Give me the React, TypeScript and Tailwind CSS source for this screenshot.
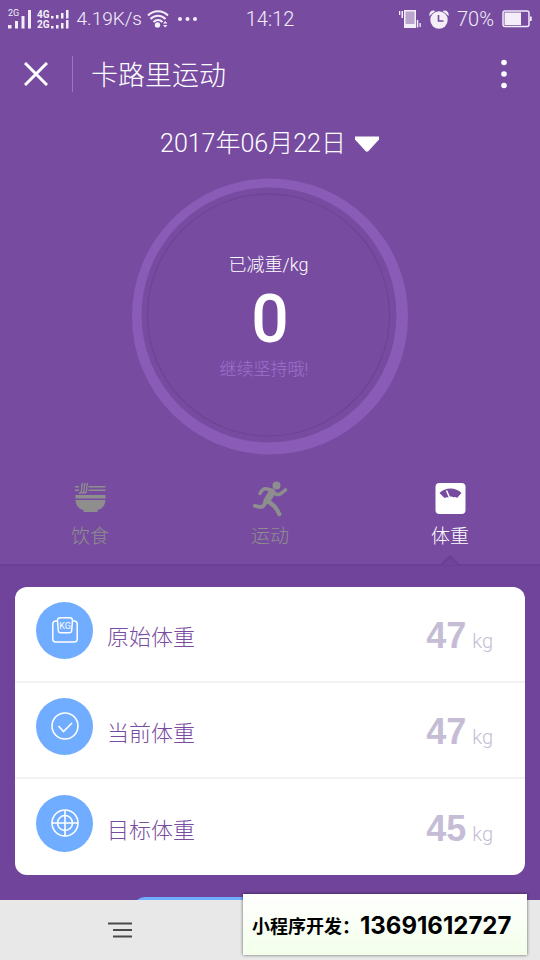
import type { ReactNode } from "react";

type Tab = {
  id: string;
  label: string;
  icon: ReactNode;
};

type WeightRow = {
  label: string;
  value: number;
  icon: ReactNode;
};

function SignalIcon() {
  return (
    <svg width="24" height="20" viewBox="0 0 24 20" fill="currentColor" aria-hidden="true">
      <rect x="0" y="16" width="3.500" height="3.500" />
      <rect x="7" y="12" width="3" height="7.500" />
      <rect x="13.500" y="7" width="3" height="12.500" />
      <rect x="20" y="1" width="3" height="18.500" />
    </svg>
  );
}

function SmallBars() {
  return (
    <svg width="18" height="9" viewBox="0 0 18 9" fill="currentColor" aria-hidden="true">
      <rect x="0" y="6" width="2.500" height="2.500" />
      <rect x="5" y="5" width="2.500" height="3.500" />
      <rect x="10" y="3" width="2.500" height="5.500" />
      <rect x="15" y="0" width="2.500" height="8.500" />
    </svg>
  );
}

function WifiIcon() {
  return (
    <svg width="22" height="18" viewBox="0 0 22 18" fill="none" stroke="currentColor" strokeWidth="2" aria-hidden="true">
      <path d="M1 5.5C6.500-.300 15.500-.300 21 5.500" />
      <path d="M3.500 9C7.700 4.500 14.300 4.500 18.500 9" />
      <path d="M6.500 12C9 9.200 13 9.200 15.500 12" />
      <circle cx="10.500" cy="15" r="2.700" fill="currentColor" stroke="none" />
      <path d="M16 13.500l2.200-2.500 2.200 2.500zM16 15l2.200 2.500 2.200-2.500z" fill="currentColor" stroke="none" />
    </svg>
  );
}

function VibrateIcon() {
  return (
    <svg width="22" height="18" viewBox="0 0 22 18" fill="currentColor" aria-hidden="true">
      <rect x="0" y="1" width="1.300" height="4" />
      <rect x="2.500" y="1" width="1.500" height="7" />
      <path d="M5 0h12v18H5z" />
      <path d="M6.500 1.500h9v12.500h-9z" fill="#bba5cf" />
      <rect x="17.800" y="10" width="1.500" height="7.500" />
      <rect x="20.500" y="13" width="1.300" height="4" />
    </svg>
  );
}

function AlarmIcon() {
  return (
    <svg width="20" height="19" viewBox="0 0 20 19" aria-hidden="true">
      <path d="M.5 6C-.5 2 3 -.8 6.500 1zM19.500 6C20.500 2 17 -.8 13.500 1z" fill="currentColor" />
      <circle cx="10" cy="10" r="9.300" fill="#774ca0" />
      <circle cx="10" cy="10" r="8.700" fill="currentColor" />
      <path d="M9.500 5v6h5" fill="none" stroke="#774ca0" strokeWidth="1.600" />
    </svg>
  );
}

function BatteryIcon() {
  return (
    <svg width="30" height="18" viewBox="0 0 30 18" aria-hidden="true">
      <rect x="1" y="1" width="26" height="15.500" rx="2" fill="none" stroke="currentColor" strokeWidth="1.500" />
      <rect x="2.500" y="2.500" width="16.500" height="12.500" fill="currentColor" />
      <rect x="28" y="6.500" width="1.700" height="4.500" fill="currentColor" />
    </svg>
  );
}

function BowlIcon() {
  return (
    <svg width="31" height="34" viewBox="0 -1 31 34" fill="currentColor" aria-hidden="true">
      <path d="M0 3h4v1.400H0zM0 6.500h4v1.400H0zM13.500 3h17v1.400h-17zM13.500 6.500h17v1.400h-17z" />
      <path
        d="M8 .5C5.500 1 7.500 5 6.500 8c-.3 1.500-1.200 2.300-2.500 2.500M10.500.5C8 1 10 5 9 8c-.3 1.500-1.200 2.300-2.500 2.500M13 .5C10.500 1 12.500 5 11.500 8c-.3 1.500-1.200 2.300-2.500 2.500"
        fill="none"
        stroke="currentColor"
        strokeWidth="1.300"
      />
      <path d="M.5 12h30v3.500H.5zM.5 17h30c-.2 5-3 9-8 10v2h-14v-2c-5-1-7.800-5-8-10z" />
    </svg>
  );
}

function RunnerIcon() {
  return (
    <svg width="36" height="36" viewBox="0 0 36 36" fill="none" stroke="currentColor" strokeLinecap="round" strokeLinejoin="round" aria-hidden="true">
      <circle cx="24.500" cy="4.500" r="4" fill="currentColor" stroke="none" />
      <path d="M8 12.500C9.500 9.500 11.500 7.500 14 7.800L20.500 9.500" strokeWidth="3.500" />
      <path d="M20.500 9.500C22 13.500 26 14.500 29 12.500L33.500 8.800" strokeWidth="3.500" />
      <path d="M20 11.500L15 19.500" strokeWidth="7" />
      <path d="M14 20.500L12 24C10.500 26.500 6.500 26 3 24.800" strokeWidth="4" />
      <path d="M16.500 20.500L21.500 24.500C24 26.500 26 30.500 27.300 33.200" strokeWidth="4.200" />
    </svg>
  );
}

function ScaleIcon() {
  return (
    <svg width="31" height="34" viewBox="0 0 31 34" aria-hidden="true">
      <rect x="0.500" y="1" width="30" height="31" rx="4" fill="currentColor" />
      <path d="M4.500 11C10 5 21 5 26.500 11L22 16c-1-1-2-1.200-3-.5-2-1.500-4-1.500-6 0-1-.5-2-.3-3.500.5z" fill="#774ca0" />
      <path d="M11.500 8.500l3 7" stroke="currentColor" strokeWidth="1.500" />
    </svg>
  );
}

function KgIcon() {
  return (
    <svg width="28" height="28" viewBox="0 0 28 28" fill="none" stroke="currentColor" strokeWidth="1.500" aria-hidden="true">
      <path d="M6.500 5H5C3 5 1.800 6.200 1.800 8v15c0 1.800 1.200 3 3 3h18.400c1.800 0 3-1.200 3-3V8c0-1.800-1.200-3-3.200-3h-1.500" />
      <path d="M6.500 4.500c0-1.700 1-2.700 2.700-2.700h9.600c1.700 0 2.700 1 2.700 2.700l-.8 10c-.1 1.500-1 2.300-2.500 2.300H9.800c-1.500 0-2.400-.8-2.500-2.300z" />
      <text x="14" y="12.500" textAnchor="middle" fill="currentColor" stroke="none" fontSize="9" fontWeight="400" fontFamily="Roboto, sans-serif">
        KG
      </text>
    </svg>
  );
}

function CheckIcon() {
  return (
    <svg width="28" height="28" viewBox="0 0 28 28" fill="none" stroke="currentColor" strokeWidth="1.600" aria-hidden="true">
      <circle cx="14" cy="14" r="13" />
      <path d="M7.500 14l5 5.500 8.500-8.500" />
    </svg>
  );
}

function TargetIcon() {
  return (
    <svg width="28" height="28" viewBox="0 0 28 28" fill="none" stroke="currentColor" strokeWidth="1.600" aria-hidden="true">
      <circle cx="14" cy="14" r="13" />
      <circle cx="14" cy="14" r="7.500" />
      <path d="M14 1v26M1 14h26" />
    </svg>
  );
}

const tabs: Tab[] = [
  { id: "food", label: "饮食", icon: <BowlIcon /> },
  { id: "sport", label: "运动", icon: <RunnerIcon /> },
  { id: "weight", label: "体重", icon: <ScaleIcon /> },
];

const rows: WeightRow[] = [
  { label: "原始体重", value: 47, icon: <KgIcon /> },
  { label: "当前体重", value: 47, icon: <CheckIcon /> },
  { label: "目标体重", value: 45, icon: <TargetIcon /> },
];

function StatusBar() {
  return (
    <div className="grid h-[38px] grid-cols-[1fr_auto_1fr] items-center pl-2 pr-2 text-xl text-[#f3eef8]">
      <div className="flex items-center gap-1">
        <div className="relative">
          <SignalIcon />
          <span className="absolute left-0 top-0 text-[9px] font-normal leading-none">2G</span>
        </div>
        <div className="flex flex-col gap-px pl-px text-[10px] font-bold leading-[9px]">
          <span className="flex items-center gap-px">4G<SmallBars /></span>
          <span className="flex items-center gap-px">2G<SmallBars /></span>
        </div>
        <span className="pl-1 pr-px text-[19px]">4.19K/s</span>
        <WifiIcon />
        <svg className="ml-1" width="22" height="6" viewBox="0 0 22 6" fill="currentColor" aria-hidden="true">
          <circle cx="3" cy="3" r="2" />
          <circle cx="10.500" cy="3" r="2" />
          <circle cx="18" cy="3" r="2" />
        </svg>
      </div>
      <span>14:12</span>
      <div className="flex items-center justify-end gap-2">
        <VibrateIcon />
        <AlarmIcon />
        <span>70%</span>
        <BatteryIcon />
      </div>
    </div>
  );
}

function TitleBar() {
  return (
    <header className="flex h-[72px] items-center pl-6 pr-6">
      <button type="button" aria-label="关闭">
        <svg width="24" height="24" viewBox="0 0 24 24" stroke="currentColor" strokeWidth="3" aria-hidden="true">
          <path d="M1 1l22 22M23 1L1 23" />
        </svg>
      </button>
      <span className="ml-6 h-9 w-px bg-[#9a79ba]" />
      <h1 className="ml-[18px] flex-1 pt-1 text-[27px] leading-9">卡路里运动</h1>
      <button type="button" aria-label="更多" className="flex w-6 justify-center">
        <svg width="6" height="30" viewBox="0 0 6 30" fill="currentColor" aria-hidden="true">
          <circle cx="3" cy="3.500" r="2.800" />
          <circle cx="3" cy="15" r="2.800" />
          <circle cx="3" cy="26.500" r="2.800" />
        </svg>
      </button>
    </header>
  );
}

function LossRing() {
  return (
    <section className="relative mx-auto mt-4 h-[277px] w-[276px]">
      <svg className="absolute inset-0" width="276" height="277" viewBox="0 0 276 277" aria-hidden="true">
        <circle cx="138" cy="138.500" r="138" fill="#8a5cb7" />
        <circle cx="137" cy="137" r="127.500" fill="#774ca0" />
        <circle cx="136.500" cy="137" r="121" fill="none" stroke="#6f4398" strokeWidth="1.300" />
      </svg>
      <div className="relative flex flex-col items-center pt-[75px]">
        <p className="pr-[3px] text-lg leading-6">已减重/kg</p>
        <p className="mt-[9px] text-[66px] font-medium leading-[68px]">0</p>
        <p className="mt-[3px] pr-3 text-[17px] leading-6 text-[#9f70cf]">继续坚持哦!</p>
      </div>
    </section>
  );
}

export default function App() {
  const active = "weight";

  return (
    <div className="relative flex min-h-screen flex-col bg-[#774ca0] font-[Roboto,'Noto_Sans_CJK_SC',sans-serif] font-light text-white">
      <StatusBar />
      <TitleBar />

      <button type="button" className="mx-auto mt-4 flex items-center gap-2 text-[25px] leading-9">
        <span>2017年06月22日</span>
        <svg width="26" height="18" viewBox="0 0 26 18" fill="currentColor" aria-hidden="true">
          <path d="M1 1.500h24v3L14.500 16q-1.500 1.500-3 0L1 4.500z" />
        </svg>
      </button>
      <LossRing />

      <nav className="mt-6 grid h-[87px] grid-cols-3 border-b-2 border-[#6b3f95]">
        {tabs.map((tab) => (
          <button
            key={tab.id}
            type="button"
            className={
              tab.id === active
                ? "relative flex flex-col items-center text-white"
                : "relative flex flex-col items-center text-[#8e8e8e]"
            }
          >
            <span className="flex h-10 items-center">{tab.icon}</span>
            <span className="mt-1 text-[19px] leading-7">{tab.label}</span>
            {tab.id === active && (
              <svg className="absolute bottom-[-2px]" width="20" height="11" viewBox="0 0 20 11" aria-hidden="true">
                <path d="M1 10L10 1.500l9 8.500" fill="#70449b" stroke="#6b3f95" strokeWidth="2" />
              </svg>
            )}
          </button>
        ))}
      </nav>

      <main className="flex flex-1 flex-col bg-[#70449b] px-[15px] pt-[21px]">
        <ul className="divide-y-2 divide-[#f2f2f3] rounded-xl bg-white">
          {rows.map((row) => (
            <li key={row.label} className="flex h-24 items-center pl-[21px] pr-8">
              <span className="mb-2 flex h-[57px] w-[57px] items-center justify-center rounded-full bg-[#70acff]">
                {row.icon}
              </span>
              <span className="ml-[14px] flex-1 pt-2 text-[22px] leading-8 text-[#774ca0]">{row.label}</span>
              <span className="flex items-baseline gap-[6px] pt-1 text-[#c5bdd5]">
                <span className="font-['Liberation_Sans',sans-serif] text-4xl font-bold">{row.value}</span>
                <span className="text-xl">kg</span>
              </span>
            </li>
          ))}
        </ul>
        {/* only the top edge of the save button shows above the system bar */}
        <div className="mt-auto h-[3px] overflow-hidden">
          <button type="button" aria-label="保存" className="mx-auto block h-12 w-[274px] rounded-xl bg-[#70acff]" />
        </div>
      </main>

      <footer className="flex h-[60px] items-center bg-[#e8e8e8] pl-[108px] text-[#4a4a4a]">
        <button type="button" aria-label="菜单">
          <svg width="24" height="16" viewBox="0 0 24 16" stroke="currentColor" strokeWidth="1.800" aria-hidden="true">
            <path d="M0 1.500h24M5 8h19M5 14.500h19" />
          </svg>
        </button>
      </footer>

      <aside className="absolute bottom-[5px] right-[13px] flex h-[61px] w-[284px] items-center bg-linear-to-b from-white to-[#f3ffea] pl-[9px] font-bold text-black shadow-[0_0_3px_rgba(0,0,0,0.6)]">
        <span className="pt-1 text-lg">小程序开发：</span>
        <span className="pt-[2px] font-[Inter,sans-serif] text-2xl">13691612727</span>
      </aside>
    </div>
  );
}
